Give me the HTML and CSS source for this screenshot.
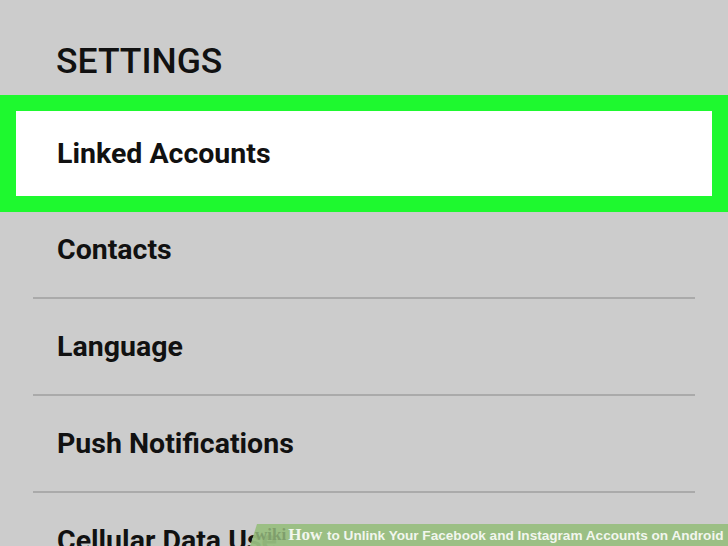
FILE: index.html
```html
<!DOCTYPE html>
<html lang="en">

<head>
    <meta charset="utf-8">
    <meta name="viewport" content="width=device-width, initial-scale=1">
    <title>Settings</title>
    <link rel="stylesheet" href="styles.css">
</head>

<body>
    <div class="screen">
        <div class="header">SETTINGS</div>
        <div class="highlight">
            <div class="item-linked">Linked Accounts</div>
        </div>
        <div class="list">
            <div class="row row-first">Contacts</div>
            <div class="row">Language</div>
            <div class="row">Push Notifications</div>
            <div class="row">Cellular Data Use</div>
        </div>
        <div class="watermark">
            <span class="wm-wiki">wiki</span><span class="wm-how">How</span> to Unlink Your Facebook and Instagram Accounts on Android
        </div>
    </div>
</body>

</html>
```

FILE: styles.css
```css
html,
body {
    margin: 0;
    padding: 0;
}

body {
    background: #cccccc;
    font-family: Roboto, "Liberation Sans", sans-serif;
    color: #111111;
}

.screen {
    position: relative;
    width: 728px;
    height: 546px;
    overflow: hidden;
}

.header {
    box-sizing: border-box;
    height: 95px;
    padding: 43px 0 0 56px;
    font-size: 35.5px;
    line-height: 36px;
    font-weight: 500;
}

.highlight {
    box-sizing: border-box;
    height: 117px;
    border: 16px solid #1ef92f;
    background: #ffffff;
    display: flex;
    align-items: center;
}

.item-linked {
    padding-left: 41px;
    font-size: 28.5px;
    font-weight: 700;
}

.list {
    margin: 0 33px;
}

.row {
    box-sizing: border-box;
    height: 97px;
    padding-left: 24px;
    display: flex;
    align-items: center;
    border-bottom: 2px solid #aaaaaa;
    font-size: 28.5px;
    font-weight: 700;
}

.row-first {
    height: 87px;
    padding-bottom: 10px;
}

.watermark {
    position: absolute;
    right: 0;
    bottom: 0;
    width: 478px;
    height: 22px;
    box-sizing: border-box;
    padding-left: 5px;
    background: rgba(152, 190, 128, 0.94);
    clip-path: polygon(7px 0, 100% 0, 100% 100%, 0 100%);
    color: #f2f6ee;
    font-family: "Liberation Sans", Arial, sans-serif;
    font-size: 13.6px;
    font-weight: 700;
    line-height: 22px;
    white-space: nowrap;
}

.wm-wiki {
    font-family: "Liberation Serif", serif;
    font-weight: 700;
    font-size: 17px;
    color: #7f9e6c;
    margin-right: 2px;
}

.wm-how {
    font-family: "Liberation Serif", serif;
    font-size: 17px;
    font-weight: 700;
    margin-right: 1px;
}
```
